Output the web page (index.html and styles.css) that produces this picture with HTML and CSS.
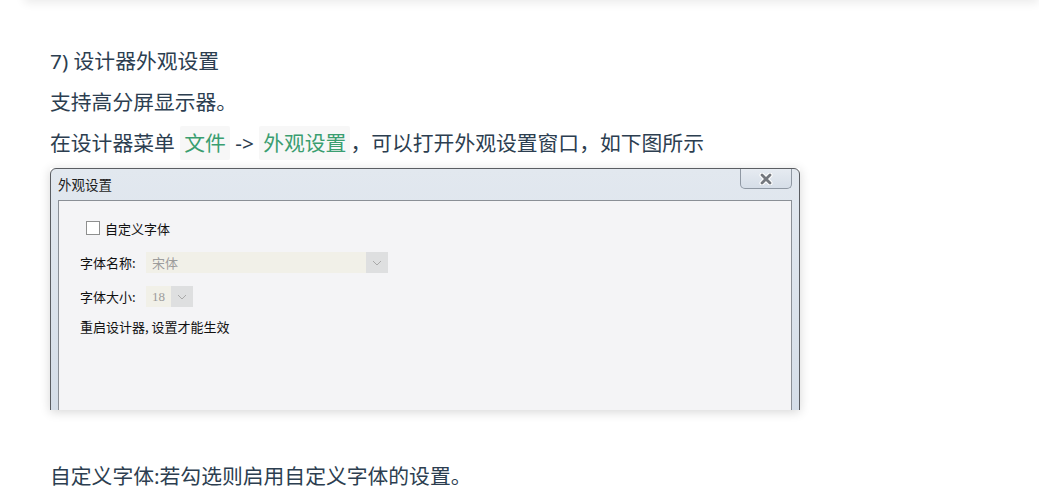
FILE: index.html
```html
<!DOCTYPE html>
<html lang="zh">
<head>
<meta charset="utf-8">
<link rel="stylesheet" href="styles.css">
</head>
<body>
<div class="prev-card"></div>
<main class="content">
  <p class="heading">7) 设计器外观设置</p>
  <p class="para">支持高分屏显示器。</p>
  <p class="para">在设计器菜单 <code class="code">文件</code> -&gt; <code class="code">外观设置</code>，可以打开外观设置窗口，如下图所示</p>
  <div class="shot">
    <div class="win">
      <div class="titlebar">
        <span class="title">外观设置</span>
        <span class="close">
          <svg width="18" height="12" viewBox="0 0 18 12">
            <path d="M5 2 L13 10 M13 2 L5 10" stroke="#ffffff" stroke-width="5" stroke-linecap="round"/>
            <path d="M5 2 L13 10 M13 2 L5 10" stroke="#74787e" stroke-width="2.8" stroke-linecap="round"/>
          </svg>
        </span>
      </div>
      <div class="frame">
        <div class="dlg-body">
          <div class="chk-row"><span class="chk"></span><span>自定义字体</span></div>
          <div class="field-row one">
            <span class="lbl">字体名称:</span>
            <span class="sel wide"><span class="sel-val">宋体</span><span class="sel-arrow"><svg width="10" height="6" viewBox="0 0 10 6"><path d="M1 1 L5 5 L9 1" fill="none" stroke="#a9a9a9" stroke-width="1"/></svg></span></span>
          </div>
          <div class="field-row two">
            <span class="lbl">字体大小:</span>
            <span class="sel narrow"><span class="sel-val num">18</span><span class="sel-arrow"><svg width="10" height="6" viewBox="0 0 10 6"><path d="M1 1 L5 5 L9 1" fill="none" stroke="#a9a9a9" stroke-width="1"/></svg></span></span>
          </div>
          <div class="note">重启设计器, 设置才能生效</div>
        </div>
      </div>
    </div>
  </div>
  <p class="para last">自定义字体:若勾选则启用自定义字体的设置。</p>
</main>
</body>
</html>
```

FILE: styles.css
```css
html, body {
  margin: 0;
  padding: 0;
  background: #ffffff;
}
body {
  font-family: "Noto Sans", "Noto Sans CJK SC", sans-serif;
  color: #2c3e50;
  overflow: hidden;
  height: 499px;
}
.prev-card {
  height: 20px;
  margin: -20px 0 0 24px;
  background: #ffffff;
  box-shadow: 0 3px 10px rgba(0, 0, 0, 0.08);
}
.content {
  padding: 44px 0 0 50px;
}
.heading, .para {
  margin: 0 0 7px;
  font-size: 20.8px;
  line-height: 34px;
  font-weight: 400;
}
.code {
  font-family: "Noto Sans", "Noto Sans CJK SC", sans-serif;
  font-size: 20.8px;
  color: #3a9e70;
  background: #f7f7f7;
  padding: 3px 4px;
  border-radius: 2px;
}
.shot {
  margin: 8px 0 0 0;
  width: 750px;
  height: 242px;
  overflow: hidden;
  box-shadow: 0 2px 10px rgba(0, 0, 0, 0.16);
}
.win {
  height: 260px;
  border: 1px solid #5a5d62;
  border-radius: 6px 6px 0 0;
  background: linear-gradient(180deg, #e2e8ef 0%, #d4dde8 100%);
  display: flex;
  flex-direction: column;
  box-sizing: border-box;
}
.titlebar {
  height: 31px;
  display: flex;
  justify-content: space-between;
  align-items: flex-start;
  padding: 0 7px 0 7px;
}
.title {
  font-family: "Noto Sans CJK SC", sans-serif;
  font-size: 13.5px;
  line-height: 31px;
  color: #1c1c1c;
}
.close {
  width: 50px;
  height: 19px;
  border: 1px solid #8f98a3;
  border-top: none;
  border-radius: 0 0 5px 5px;
  background: linear-gradient(180deg, #e6ebf1, #d6dee8);
  display: flex;
  align-items: center;
  justify-content: center;
}
.frame {
  flex: 1;
  margin: 0 7px;
  border: 1px solid #8a8f96;
  border-bottom: none;
  background: #f4f4f6;
}
.dlg-body {
  display: flex;
  flex-direction: column;
  padding: 17px 0 0 21px;
  font-family: "Noto Sans CJK SC", sans-serif;
  font-size: 13px;
  color: #111111;
}
.chk-row {
  height: 20px;
  margin-left: 6px;
  display: flex;
  align-items: center;
  gap: 5px;
}
.chk {
  width: 12px;
  height: 12px;
  border: 1px solid #8e8f8f;
  background: #ffffff;
}
.field-row {
  display: flex;
  align-items: center;
  height: 21px;
}
.field-row.one { margin-top: 14px; }
.field-row.two { margin-top: 13px; }
.lbl {
  width: 66px;
}
.sel {
  display: flex;
  height: 21px;
  background: #dedfe0;
}
.sel.wide { width: 242px; }
.sel.narrow { width: 47px; }
.sel-val {
  flex: 1;
  background: #f1f0e8;
  color: #9c9c9c;
  line-height: 21px;
  padding-left: 6px;
}
.sel-val.num {
  font-family: "Liberation Serif", serif;
  font-size: 13px;
}
.sel-arrow {
  width: 22px;
  display: flex;
  align-items: center;
  justify-content: center;
}
.note {
  margin-top: 11px;
  line-height: 18px;
}
.para.last {
  margin-top: 49px;
}
```
